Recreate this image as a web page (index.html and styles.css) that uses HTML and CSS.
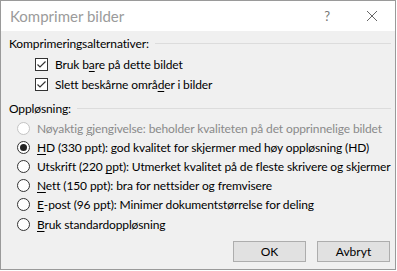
FILE: index.html
```html
<!DOCTYPE html>
<html lang="no">

<head>
  <meta charset="UTF-8" />
  <meta name="viewport" content="width=device-width, initial-scale=1.0" />
  <link rel="stylesheet" href="styles.css">
  <title>Komprimer bilder</title>
</head>

<body>
  <div class="dialog">
    <div class="titlebar">
      <span class="title">Komprimer bilder</span>
      <span class="help">?</span>
      <svg class="close" width="12" height="12" viewBox="0 0 12 12">
        <path d="M1 1 L11 11 M11 1 L1 11" stroke="#666" stroke-width="1" fill="none" />
      </svg>
    </div>

    <div class="content">
      <div class="group-header first">
        <span>Komprimeringsalternativer:</span>
        <div class="rule"></div>
      </div>

      <div class="check-row">
        <span class="checkbox">
          <svg width="11" height="11" viewBox="0 0 11 11">
            <path d="M1.5 5.5 L4 8 L9.5 2.5" stroke="#333" stroke-width="1.2" fill="none" />
          </svg>
        </span>
        <span>Bruk b<u>a</u>re på dette bildet</span>
      </div>
      <div class="check-row">
        <span class="checkbox">
          <svg width="11" height="11" viewBox="0 0 11 11">
            <path d="M1.5 5.5 L4 8 L9.5 2.5" stroke="#333" stroke-width="1.2" fill="none" />
          </svg>
        </span>
        <span>Slett beskårne områ<u>d</u>er i bilder</span>
      </div>

      <div class="group-header second">
        <span>Oppløsning:</span>
        <div class="rule"></div>
      </div>

      <div class="radios">
        <div class="radio-row disabled">
          <span class="radio"></span>
          <span>Nøyaktig <u>g</u>jengivelse: beholder kvaliteten på det opprinnelige bildet</span>
        </div>
        <div class="radio-row">
          <span class="radio checked"></span>
          <span><u>H</u>D (330 ppt): god kvalitet for skjermer med høy oppløsning (HD)</span>
        </div>
        <div class="radio-row">
          <span class="radio"></span>
          <span>Utskrift (220 <u>p</u>pt): Utmerket kvalitet på de fleste skrivere og skjermer</span>
        </div>
        <div class="radio-row">
          <span class="radio"></span>
          <span><u>N</u>ett (150 ppt): bra for nettsider og fremvisere</span>
        </div>
        <div class="radio-row">
          <span class="radio"></span>
          <span><u>E</u>-post (96 ppt): Minimer dokumentstørrelse for deling</span>
        </div>
        <div class="radio-row">
          <span class="radio"></span>
          <span><u>B</u>ruk standardoppløsning</span>
        </div>
      </div>

      <div class="footer">
        <button class="button">OK</button>
        <button class="button">Avbryt</button>
      </div>
    </div>
  </div>
</body>

</html>
```

FILE: styles.css
```css
* {
  margin: 0px;
  padding: 0px;
  box-sizing: border-box;
  font-family: Lato, "Noto Sans", sans-serif;
}

body {
  background-color: #fff;
}

u {
  text-decoration: underline;
  text-underline-offset: 2px;
}

.dialog {
  width: 396px;
  height: 270px;
  border: 1px solid #9a9a9a;
  display: flex;
  flex-direction: column;
  background-color: #f0f0f0;
}

.titlebar {
  height: 30px;
  background-color: #fff;
  display: flex;
  align-items: center;
  padding-left: 9px;
}

.title {
  font-size: 15px;
  color: #9b9b9b;
  flex: 1;
}

.help {
  font-size: 13px;
  color: #777;
  margin-right: 36px;
}

.close {
  margin-right: 17px;
}

.content {
  flex: 1;
  display: flex;
  flex-direction: column;
  font-size: 12px;
  letter-spacing: -0.12px;
  color: #000;
}

.group-header {
  display: flex;
  align-items: center;
  height: 16px;
  padding-left: 8px;
  padding-right: 4px;
}

.group-header.first {
  margin-top: 4px;
}

.group-header.second {
  margin-top: 6px;
}

.rule {
  flex: 1;
  height: 1px;
  background-color: #dcdcdc;
  margin-left: 6px;
}

.check-row {
  height: 20px;
  display: flex;
  align-items: center;
  padding-left: 34px;
  gap: 7px;
}

.group-header.first + .check-row {
  margin-top: 3px;
}

.checkbox {
  width: 13px;
  height: 13px;
  border: 1px solid #333;
  background-color: #fff;
  display: flex;
  align-items: center;
  justify-content: center;
}

.radios {
  margin-top: 2.5px;
  display: flex;
  flex-direction: column;
}

.radio-row {
  height: 19.2px;
  display: flex;
  align-items: center;
  padding-left: 16px;
  gap: 7px;
  white-space: nowrap;
}

.radio {
  width: 13px;
  height: 13px;
  border: 1px solid #333;
  border-radius: 50%;
  background-color: #fff;
  flex-shrink: 0;
  display: flex;
  align-items: center;
  justify-content: center;
}

.radio.checked::after {
  content: "";
  width: 7px;
  height: 7px;
  border-radius: 50%;
  background-color: #222;
}

.radio-row.disabled {
  color: #8a8a8a;
}

.radio-row.disabled .radio {
  border-color: #c4c4c4;
}

.footer {
  margin-top: 7px;
  display: flex;
  justify-content: flex-end;
  gap: 11px;
  padding-right: 5px;
}

.button {
  width: 73px;
  height: 21px;
  border: 1px solid #adadad;
  background-color: #e1e1e1;
  font-size: 12px;
  letter-spacing: 0;
  color: #000;
}
```
